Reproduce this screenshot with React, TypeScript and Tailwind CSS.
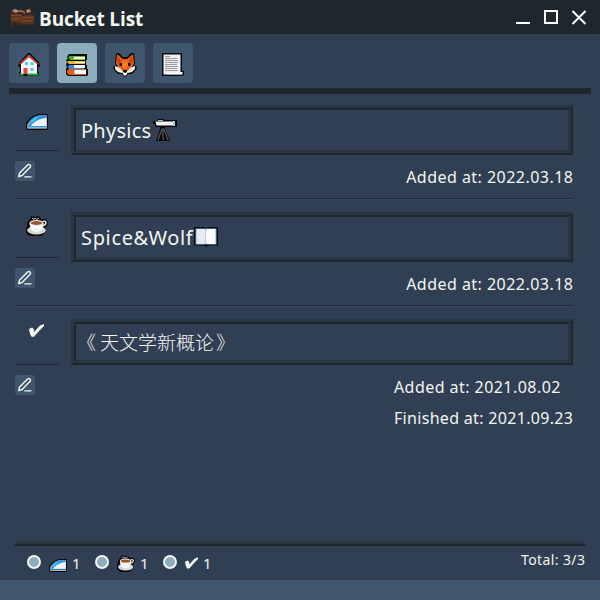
import React from "react";

type IconProps = { className?: string };

const Train = ({ className = "" }: IconProps) => (
  <svg viewBox="0 0 22 16" className={className}>
    <path d="M22 0H12L7 2 3 5 0 9v6l1 1h21Z" fill="#080b0e" />
    <path d="M20.800 1.400H12.500C8 2.500 4 5.500 2 9.500L1.200 12V14.600H20.800Z" fill="#eef1f5" />
    <path d="M20.800 1.400H13C8 2 4.500 5 2.500 8.500L1.200 12H5C8 7.500 13 4.800 20.800 3.800Z" fill="#2f8fe0" />
    <path d="M6 6 12 2l-1 2.500-5 4.500-3 1Z" fill="#40c6ed" />
    <path d="M2 9 4 9.500l-1 2H1.500Z" fill="#e8a537" />
    <path d="M1.200 12.200H20.800V13.500H1.200Z" fill="#1581cc" />
  </svg>
);
const Coffee = ({ className = "" }: IconProps) => (
  <svg viewBox="0 0 22 20" className={className}>
    <path d="M4 3 5 0l2 1 1-1 2 1 2-1 2 1 1 2 5 0 2 3-1 4-2 1 1 4-2 3-4 3H6l-4-2-2-3v-3l1-3V7Z" fill="#0b0c0e" />
    <path d="m6 2 2 1.500 1-1.500 2 1.500 2-1.500" stroke="#d9d9d9" strokeWidth=".9" fill="none" />
    <ellipse cx="10.500" cy="14.200" rx="9.300" ry="4.300" fill="#d8d8d8" />
    <path d="M3.500 7C4 13 6 16 10.500 16S17 13 17.500 7Z" fill="#f5f5f5" />
    <ellipse cx="10.500" cy="6.800" rx="7" ry="2.800" fill="#f1e8e1" />
    <ellipse cx="10.500" cy="7" rx="5.700" ry="1.900" fill="#9a5633" />
    <path d="M17 5.500c4-1.500 4 3-.5 4.500" stroke="#e4e4e4" strokeWidth="1.500" fill="none" />
  </svg>
);
const Check = ({ className = "" }: IconProps) => (
  <svg viewBox="0 0 15 13" className={className}>
    <path d="M0 5 3 3.500 4.700 5 5 8 11 1.500 15 0V2L11 6 6.500 11 5 12.800H2.500L1 10Z" fill="#f3f6f1" />
  </svg>
);
const House = () => (
  <svg viewBox="0 0 22 24" className="h-6 w-[22px]">
    <path d="M10 0h2l9 9 1 5h-2v5h1v4H1v-4h1v-5H0l1-4Z" fill="#090b0d" />
    <path d="M3 11 11 4l8 7v10H3Z" fill="#f3f2f5" />
    <path d="m2 11 9-8.500L20 11" stroke="#e84b41" strokeWidth="1.300" fill="none" />
    <path d="M7 9h3v3H7ZM12.500 9h3v3h-3ZM12.500 15h3v3h-3Z" fill="#48cfee" />
    <path d="M5.500 15h4v6h-4Z" fill="#e3443d" />
    <path d="M1.500 20.500h4v2h-4ZM9.500 20.500h11v2h-11Z" fill="#25b13e" />
  </svg>
);
const Books = () => (
  <svg viewBox="0 0 22 24" className="h-6 w-[22px]">
    <path d="M3 1h18v6h-1v5h1v4h1v6l-1 1H2l-2-2v-5l1-2-1-2 1-3-1-2 2-1-1-2Z" fill="#080a0c" />
    <path d="m3 3 4 0v4H4L2.500 5Z" fill="#45a92b" />
    <path d="M7 3h12v1H7ZM5 6h14v1H5Z" fill="#67c02c" />
    <path d="M8 4h11v2H7Z" fill="#fff" />
    <path d="M2 8h17v1H9v1h10v1H3L1 9Z" fill="#efb82c" />
    <path d="M9 9h10v1H9Z" fill="#fff" />
    <path d="M3 12h16v1H8v2h10v1H3L2 14Z" fill="#278cda" />
    <path d="M8 12h11v3H8Z" fill="#f6f4f3" />
    <path d="M3 16h17v2H9v3h11v1H3l-2-2v-2Z" fill="#e95a15" />
    <path d="M9 17h11v4H9l-1-2Z" fill="#fff" />
  </svg>
);
const Fox = () => (
  <svg viewBox="0 0 24 24" className="size-6">
    <path d="M3 0h3l4 4h4l4-4h3l1 10-1 2 3 2-1 3-4 4-4 0-3 3-3-3-4 0-4-4-1-3 3-2-1-3Z" fill="#0b0b0b" />
    <path d="m4 1 6 5h4l6-5 1 9-3 7-6 4-6-4-3-7Z" fill="#e95918" />
    <path d="m4 4 4 4-3 2ZM20 4l-4 4 3 2Z" fill="#b93d16" />
    <path d="m10 6 2 4 2-4 1 7-3 3-3-3Z" fill="#ff7a22" />
    <path d="m2 13 5 2 3 4-1 1-4-1-3-3ZM22 13l-5 2-3 4 1 1 4-1 3-3Z" fill="#f3eee6" />
    <path d="m9 18 3-1 3 1-1 3-2 2-2-2Z" fill="#fff" />
    <path d="M6.500 10h2.500v3H6.500ZM15 10h2.500v3H15ZM10 17h4v2l-2 1-2-1Z" fill="#160f0d" />
  </svg>
);
const Scroll = () => (
  <svg viewBox="0 0 22 24" className="h-6 w-[22px]">
    <path d="M0 0h20v18h2v4l-2 1H0Z" fill="#090b0d" />
    <path d="M1.500 1.500H18.500V19h2v2.500h-19Z" fill="#efeff0" />
    <path d="M3 3.500h5M3 5.500h12M3 7.500h13M3 9.500h13M3 11.500h12M3 13.500h13M3 15.500h12M3 17.500h13" stroke="#9a9b9f" strokeWidth="1" />
    <path d="M5 20.500h15" stroke="#fff" strokeWidth="1.500" />
  </svg>
);
const Telescope = () => (
  <svg viewBox="0 0 24 24" className="h-6 w-6">
    <path d="M0 3h4l1-2h6v1h13v7H12v2H7V9H2V6H0Z" fill="#060708" />
    <path d="M2.500 3.500H20v4H3.500Z" fill="#f2f2f4" />
    <path d="M5 2h5v1H5Z" fill="#b9b9bb" />
    <path d="M20 3h2v5h-2Z" fill="#91cbe8" />
    <path d="M8 8h4v3l5 12H3L7 11Z" fill="#0a0a0b" />
    <path d="M9 11 5 22M10 10v12M11 11l4 11" stroke="#77787a" strokeWidth=".9" />
  </svg>
);
const OpenBook = () => (
  <svg viewBox="0 0 24 20" className="h-5 w-6">
    <path d="M0 0h10l2 1 2-1h10V18.500H14l-2 1.500-2-1.500H0Z" fill="#07090b" />
    <path d="M1.500 1.500h21v16h-21Z" fill="#69b3df" />
    <path d="M2.500 2h8l1 1v13l-1 1h-8Z" fill="#eaeaee" />
    <path d="M13 2h8.500v15H13l-1-1V3Z" fill="#fcfcfc" />
  </svg>
);
const Bench = () => (
  <svg viewBox="0 0 26 20" className="h-5 w-[26px]">
    <path d="M1 7 2 3l4-2 4 2 2-1 4 1 3-2 3 1 1 4 3 2v10h-3v1h-3v-1H7v-1H4v2H1Z" fill="#3b2721" />
    <path d="M2 7h10l1 2 10-1 2 2v6l-9 1-14-3Z" fill="#5e3422" />
    <path d="M2 8.500h10M13 10.500h11M3 12h9M13 14h10" stroke="#7c4a31" strokeWidth="1" />
    <path d="m3 4 2-2 4 1 1 2-4 1ZM17 3l4-1 1 3-4 1Z" fill="#a77c68" />
    <path d="m10 4 3 0 3 2M6 3l2 1M19 3l1 2" stroke="#d0a392" strokeWidth="1" fill="none" />
    <path d="M2.500 14v5M9 14v3M23 15v4" stroke="#4b2c20" strokeWidth="1.500" />
  </svg>
);
const Pen = () => (
  <svg viewBox="0 0 20 20" className="size-5" fill="none" stroke="#f3f6f1" strokeWidth="1.350" strokeLinecap="round" strokeLinejoin="round">
    <path d="M3.700 15.700 4.600 12 12.600 4c1.500-1.500 4 .6 2.500 2.300l-8 8.200L3.700 15.700M9.800 15.800h6.200" />
  </svg>
);

function Row({ icon, children, dates, small = false, last = false }: {
  icon: React.ReactNode; children: React.ReactNode; dates: React.ReactNode; small?: boolean; last?: boolean;
}) {
  return (
    <section className={`flex w-[558px] justify-between ${last ? "h-[130px]" : "h-[107px] border-b border-[#202a35] shadow-[0_1px_0_#3a495e]"}`}>
      <div className="w-11 shrink-0">
        <div className="flex h-[59px] justify-center border-b border-[#1e262e]">{icon}</div>
        <button className="mt-[10px] block size-5 rounded-[3px] bg-[#40566f]"><Pen /></button>
      </div>
      <div className="w-[502px] pt-[13px]">
        <div className={`border-t-[3px] border-r-2 border-b-2 border-l-[3px] border-t-[#293541] border-l-[#293541] border-r-[#1e262e] border-b-[#1e262e] ${small ? "h-[46px]" : "h-[50px]"}`}>
          <div className="flex h-full items-center border-t-2 border-r-[3px] border-b-[3px] border-l-2 border-t-[#1e262e] border-l-[#1e262e] border-r-[#293541] border-b-[#293541] pl-[5px] text-[20px] leading-6 whitespace-nowrap">
            {children}
          </div>
        </div>
        <div className="flex justify-end pt-[7px] text-[16px] leading-[31px] whitespace-nowrap">{dates}</div>
      </div>
    </section>
  );
}

export default function App() {
  return (
    <main className="flex h-[600px] w-[600px] flex-col bg-[#313f54] font-['Noto_Sans','Noto_Sans_CJK_SC',sans-serif] text-[#f3f6f1]">
      <header className="flex h-[34px] shrink-0 items-center bg-[#1e262e] pr-[13px] pl-[9px]">
        <Bench />
        <h1 className="ml-1 pt-1 font-['Open_Sans',sans-serif] text-[19px] leading-6 font-bold tracking-[-0.12px] whitespace-nowrap">Bucket List</h1>
        <svg viewBox="0 0 72 16" className="ml-auto h-4 w-[72px]" fill="none" stroke="#fff" strokeWidth="2">
          <path d="M1 14h14M30 2h12v12H30ZM57.500 2l13 13M70.500 2l-13 13" />
        </svg>
      </header>
      <nav className="mx-[9px] flex h-[60px] shrink-0 gap-2 border-b-[6px] border-[#1e262e] pt-[9px]">
        {[<House />, <Books />, <Fox />, <Scroll />].map((icon, i) => (
          <button key={i} className={`flex size-10 items-center justify-center rounded-[4px] pt-[3px] ${i === 1 ? "bg-[#8dacbd]" : "bg-[#40566f]"}`}>{icon}</button>
        ))}
      </nav>
      <div className="ml-[15px] h-[447px] shrink-0">
        <div className="-mt-[2px]">
          <Row icon={<Train className="mt-[22px] h-4 w-[22px]" />} dates={<span className="tracking-[0.47px] -mr-[0.47px]">Added at: 2022.03.18</span>}>
            <span className="pt-[2px] tracking-[0.25px]">Physics</span><span className="ml-[2px]"><Telescope /></span>
          </Row>
          <Row icon={<Coffee className="mt-[17px] h-5 w-[22px]" />} dates={<span className="tracking-[0.47px] -mr-[0.47px]">Added at: 2022.03.18</span>}>
            <span className="pt-[2px] tracking-[0.65px]">Spice&amp;Wolf</span><span className="ml-[1px]"><OpenBook /></span>
          </Row>
          <Row last small icon={<Check className="mt-[18px] mr-[2px] h-[13px] w-[15px]" />} dates={<div><div className="tracking-[0.45px]">Added at: 2021.08.02</div><div className="tracking-[0.32px] -mr-[0.32px]">Finished at: 2021.09.23</div></div>}>
            <span className="flex font-['Noto_Sans_CJK_SC',sans-serif] text-[19px] font-light">
              <span className="-ml-1 mr-1">《</span><span>天文学新概论</span><span className="ml-[2px]">》</span>
            </span>
          </Row>
        </div>
      </div>
      <footer className="mx-[15px] h-[39px] shrink-0 border-t-[3px] border-[#293541]">
        <div className="flex justify-between border-t-2 border-[#1e262e] pl-3 text-[15px] leading-8">
          <div className="flex h-8 gap-[14px]">
            {[<Train className="h-[13px] w-[18px] translate-y-[3px]" />, <Coffee className="h-[17px] w-[18px] translate-y-[1px]" />, <Check className="h-[12px] w-[13px] translate-y-[1px]" />].map((icon, i) => (
              <label key={i} className="flex w-[54px] items-center">
                <span className="mr-2 size-[14px] rounded-full border-2 border-[#f3f6f1] bg-[#8dacbd]" />
                {icon}<span className="ml-[5px] pt-px">1</span>
              </label>
            ))}
          </div>
          <span className="text-[14px] leading-[28px] tracking-[0.4px] -mr-[0.4px]">Total: 3/3</span>
        </div>
      </footer>
      <div className="h-5 shrink-0 bg-[#40566f]" />
    </main>
  );
}
